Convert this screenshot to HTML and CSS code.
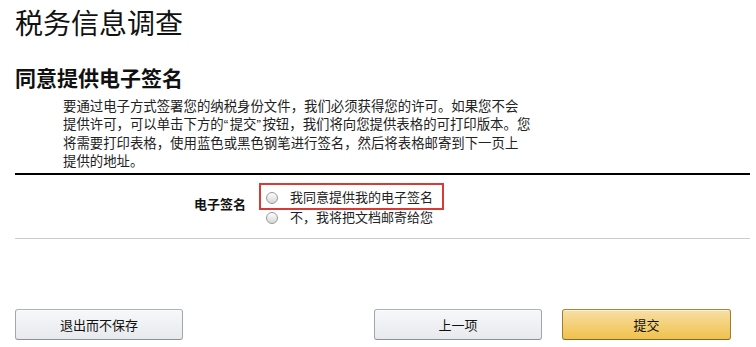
FILE: index.html
```html
<!DOCTYPE html>
<html lang="zh-CN">
<head>
    <meta charset="UTF-8">
    <meta name="viewport" content="width=device-width, initial-scale=1.0">
    <title>税务信息调查</title>
    <link rel="stylesheet" href="styles.css">
</head>
<body>
    <div class="page">
        <h1>税务信息调查</h1>
        <h2>同意提供电子签名</h2>
        <p class="intro">要通过电子方式签署您的纳税身份文件，我们必须获得您的许可。如果您不会<br>
        提供许可，可以单击下方的<span class="q">“</span>提交<span class="q">”</span>按钮，我们将向您提供表格的可打印版本。您<br>
        将需要打印表格，使用蓝色或黑色钢笔进行签名，然后将表格邮寄到下一页上<br>
        提供的地址。</p>

        <div class="form-row">
            <div class="label">电子签名</div>
            <div class="options">
                <label class="option highlight"><input type="radio" name="sign"> 我同意提供我的电子签名</label>
                <label class="option"><input type="radio" name="sign"> 不，我将把文档邮寄给您</label>
            </div>
        </div>

        <div class="buttons">
            <button class="btn">退出而不保存</button>
            <div class="right">
                <button class="btn">上一项</button>
                <button class="btn btn-primary">提交</button>
            </div>
        </div>
    </div>
</body>
</html>
```

FILE: styles.css
```css
body {
    margin: 0;
    padding: 0;
    font-family: Arial, "Noto Sans CJK SC", sans-serif;
    color: #111;
    background: #fff;
}

.page {
    margin: 0 6px 0 15px;
}

h1 {
    margin: 8px 0 0;
    font-size: 28px;
    line-height: 34px;
    font-weight: normal;
}

h2 {
    margin: 24px 0 0;
    font-size: 21px;
    line-height: 26px;
    font-weight: bold;
}

.intro {
    margin: 6px 0 0;
    padding: 0 0 2px 48px;
    font-size: 13.4px;
    line-height: 18.3px;
    color: #222;
    border-bottom: 2px solid #000;
}

.q {
    display: inline-block;
    width: 6px;
}

.form-row {
    display: grid;
    grid-template-columns: 231px auto;
    column-gap: 13px;
    padding: 8px 0 12px;
    border-bottom: 1px solid #ccc;
}

.label {
    text-align: right;
    font-size: 13px;
    line-height: 16px;
    font-weight: bold;
    margin-top: 14px;
}

.options {
    display: flex;
    flex-direction: column;
    align-items: flex-start;
}

.option {
    display: flex;
    align-items: center;
    font-size: 13px;
    line-height: 16px;
    color: #222;
    margin-left: 5px;
}

.option.highlight {
    margin-left: 0;
    border: 2px solid #db3a34;
    padding: 5px 9px 2px 3px;
}

.option input {
    appearance: none;
    -webkit-appearance: none;
    width: 12px;
    height: 12px;
    margin: 0 12px 0 2px;
    border: 1px solid #9a9a9a;
    border-radius: 50%;
    background: linear-gradient(#fdfdfd, #d6d6d6);
}

.buttons {
    display: flex;
    justify-content: space-between;
    margin-top: 70px;
    padding-right: 19px;
}

.right {
    display: flex;
    gap: 20px;
}

.btn {
    width: 168px;
    height: 31px;
    font-family: Arial, "Noto Sans CJK SC", sans-serif;
    font-size: 13px;
    color: #111;
    border: 1px solid #adb1b8;
    border-color: #adb1b8 #a2a6ac #8d9096;
    border-radius: 3px;
    background: linear-gradient(#f7f8fa, #e7e9ec);
    box-shadow: inset 0 1px 0 rgba(255, 255, 255, 0.6);
    cursor: pointer;
}

.btn-primary {
    width: 169px;
    border-color: #a88734 #9c7e31 #846a29;
    background: linear-gradient(#f7dfa5, #f0c14b);
}
```
